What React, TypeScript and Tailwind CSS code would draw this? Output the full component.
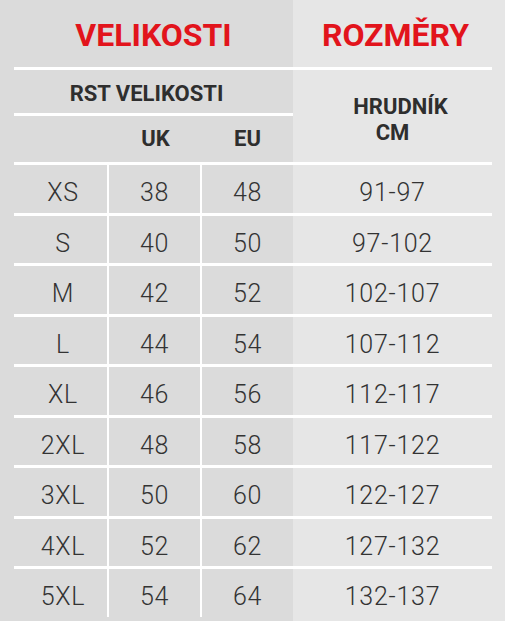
const rows = [
  ["XS", "38", "48", "91-97"],
  ["S", "40", "50", "97-102"],
  ["M", "42", "52", "102-107"],
  ["L", "44", "54", "107-112"],
  ["XL", "46", "56", "112-117"],
  ["2XL", "48", "58", "117-122"],
  ["3XL", "50", "60", "122-127"],
  ["4XL", "52", "62", "127-132"],
  ["5XL", "54", "64", "132-137"],
];

export default function App() {
  return (
    <div
      className="w-[505px] h-[621px] overflow-hidden pl-[14px] pr-[13px] bg-[linear-gradient(to_right,#dbdbdb_293px,#e6e6e6_293px)] text-[#333]"
      style={{ fontFamily: "Roboto, 'Liberation Sans', sans-serif" }}
    >
      {/* titles */}
      <div className="grid grid-cols-[279px_199px] h-[67px] pt-[3px] text-[#e2141c] font-bold text-[32px] leading-none">
        <div className="flex items-center justify-center">VELIKOSTI</div>
        <div className="flex items-center justify-center pl-[6px]">ROZMĚRY</div>
      </div>
      <div className="h-[3px] bg-white" />

      {/* sub headers */}
      <div className="grid grid-cols-[279px_199px] h-[92px] font-bold text-[22px] leading-none text-[#2e2e2e]">
        <div className="flex flex-col">
          <div className="h-[43px] flex items-center justify-center pt-[4px] pr-[14px]">RST VELIKOSTI</div>
          <div className="h-[3px] bg-white" />
          <div className="flex-1 grid grid-cols-[95px_93px_91px]">
            <div />
            <div className="flex items-center justify-center">UK</div>
            <div className="flex items-center justify-center">EU</div>
          </div>
        </div>
        <div className="flex flex-col items-center justify-center pt-[8px] leading-[26px] text-center">
          <div className="pl-[16px]">HRUDNÍK</div>
          <div>CM</div>
        </div>
      </div>

      {/* size rows */}
      {rows.map((r) => (
        <div
          key={r[0]}
          className="grid grid-cols-[95px_93px_91px_199px] h-[50.5px] border-t-[3px] border-white font-light text-[25px] leading-none tracking-[0.03em]"
        >
          <div className="flex items-center justify-center border-r-2 border-white pt-[8px] pl-[5px]">{r[0]}</div>
          <div className="flex items-center justify-center border-r-2 border-white pt-[8px]">{r[1]}</div>
          <div className="flex items-center justify-center pt-[8px]">{r[2]}</div>
          <div className="flex items-center justify-center pt-[8px]">{r[3]}</div>
        </div>
      ))}
    </div>
  );
}
